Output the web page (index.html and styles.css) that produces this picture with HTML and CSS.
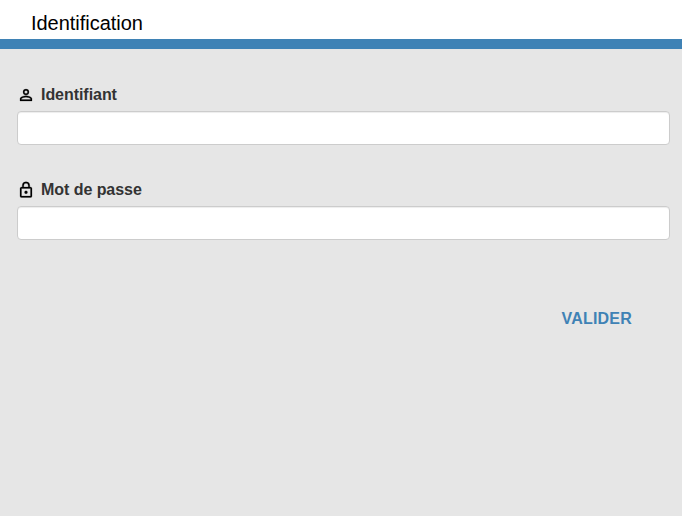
FILE: index.html
```html
<!DOCTYPE html>
<html lang="fr">
<head>
<meta charset="utf-8">
<title>Identification</title>
<link rel="stylesheet" href="styles.css">
</head>
<body>
<header class="header"><h1 class="title">Identification</h1></header>
<form class="form">
  <div class="field">
    <label class="label" for="login"><svg class="icon" viewBox="0 0 24 24"><path d="M12 5.9a2.1 2.1 0 1 1 0 4.2 2.1 2.1 0 0 1 0-4.2m0 9c2.97 0 6.1 1.46 6.1 2.1v1.1H5.9V17c0-.64 3.13-2.1 6.1-2.1M12 4a4 4 0 1 0 0 8 4 4 0 0 0 0-8m0 9c-2.67 0-8 1.34-8 4v3h16v-3c0-2.66-5.33-4-8-4"/></svg>Identifiant</label>
    <input class="input" id="login" type="text">
  </div>
  <div class="field">
    <label class="label" for="password"><svg class="icon" viewBox="0 0 24 24"><path d="M18 8h-1V6A5 5 0 0 0 7 6v2H6a2 2 0 0 0-2 2v10a2 2 0 0 0 2 2h12a2 2 0 0 0 2-2V10a2 2 0 0 0-2-2M9 6a3 3 0 0 1 6 0v2H9zm9 14H6V10h12zm-6-3a2 2 0 1 0 0-4 2 2 0 0 0 0 4"/></svg>Mot de passe</label>
    <input class="input" id="password" type="password">
  </div>
  <div class="actions"><button class="submit" type="button">VALIDER</button></div>
</form>
</body>
</html>
```
FILE: styles.css
```css
* { box-sizing: border-box; }
body {
  margin: 0;
  min-height: 100vh;
  background: #e6e6e6;
  font-family: "Liberation Sans", Arial, sans-serif;
}
.header {
  height: 49px;
  padding: 12px 31px 0;
  background: #fff;
  border-bottom: 10px solid #3f82b5;
}
.title {
  margin: 0;
  font-size: 20px;
  font-weight: 400;
  line-height: 23px;
  letter-spacing: -.03px;
  color: #000;
}
.form { padding: 34px 12px 0 17px; }
.field { margin-bottom: 33px; }
.label {
  display: flex;
  align-items: center;
  height: 24px;
  margin-bottom: 4px;
  font-size: 16px;
  font-weight: 700;
  letter-spacing: -.05px;
  color: #333;
}
.icon {
  width: 18px;
  height: 18px;
  margin-right: 6px;
  fill: #000;
  stroke: #000;
  stroke-width: .3;
}
.input {
  display: block;
  width: 100%;
  height: 34px;
  padding: 6px 12px;
  background: #fff;
  border: 1px solid #ccc;
  border-radius: 4px;
  box-shadow: inset 0 1px 1px rgba(0, 0, 0, .075);
  font: 14px/20px "Liberation Sans", Arial, sans-serif;
}
.actions {
  display: flex;
  justify-content: flex-end;
  padding: 28px 26px 0 0;
}
.submit {
  height: 36px;
  padding: 0 12px;
  background: none;
  border: 0;
  font: 700 16px/36px "Liberation Sans", Arial, sans-serif;
  letter-spacing: .2px;
  color: #3f82b5;
}
```
